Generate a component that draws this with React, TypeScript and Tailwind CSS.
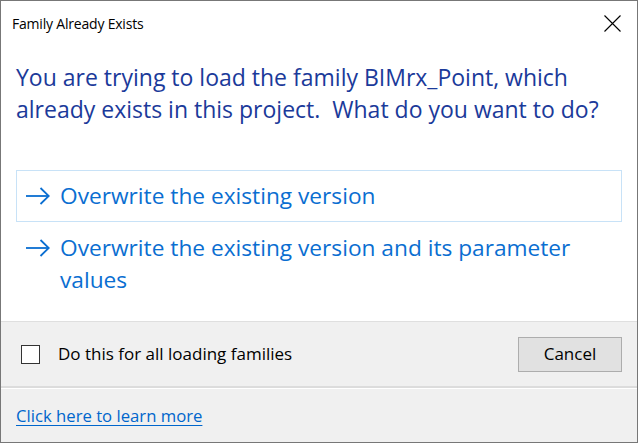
import React from "react";

const Arrow = () => (
  <svg width="24" height="18" viewBox="0 0 24 18" className="shrink-0" fill="none">
    <path d="M0 9 H22.5" stroke="#0a6ed1" strokeWidth="1.8" />
    <path d="M14.5 1 L22.8 9 L14.5 17" stroke="#0a6ed1" strokeWidth="1.8" />
  </svg>
);

export default function App() {
  return (
    <div
      className="w-[638px] h-[443px] border border-[#777777] bg-white flex flex-col overflow-hidden"
      style={{ fontFamily: '"Open Sans", "Noto Sans", sans-serif' }}
    >
      <div className="h-[45px] flex items-center justify-between pl-[11px] pr-[16px] shrink-0">
        <span className="text-[14px] text-black tracking-[-0.2px]">Family Already Exists</span>
        <svg width="17" height="17" viewBox="0 0 17 17" fill="none">
          <path d="M0.5 0.5 L16.5 16.5 M16.5 0.5 L0.5 16.5" stroke="#000" strokeWidth="1.1" />
        </svg>
      </div>
      <div className="flex-1 px-[15px]">
        <div className="mt-[15px] text-[23px] leading-[32px] text-[#1b3a9a]">
          You are trying to load the family BIMrx_Point, which
          <br />
          already exists in this project.&nbsp; What do you want to do?
        </div>
        <div className="mt-[45px] border border-[#c8e2f7] px-[9px] py-[9px] flex items-start gap-[10px]">
          <div className="h-[32px] flex items-center"><Arrow /></div>
          <span className="text-[22.7px] leading-[32px] text-[#0a6ed1]">
            Overwrite the existing version
          </span>
        </div>
        <div className="border border-transparent px-[9px] py-[9px] flex items-start gap-[10px]">
          <div className="h-[32px] flex items-center"><Arrow /></div>
          <span className="text-[22.7px] leading-[32px] text-[#0a6ed1]">
            Overwrite the existing version and its parameter
            <br />
            values
          </span>
        </div>
      </div>
      <div className="h-[67px] shrink-0 bg-[#f0f0f0] border-t border-[#dfdfdf] border-b-2 border-b-[#dcdcdc] flex items-center pl-[20px] pr-[15px]">
        <div className="w-[19px] h-[19px] border border-[#333333] bg-white shrink-0" />
        <span className="ml-[18px] text-[17px] text-black">Do this for all loading families</span>
        <div className="flex-1" />
        <div className="w-[104px] h-[35px] bg-[#e1e1e1] border border-[#adadad] flex items-center justify-center text-[17px] text-black">
          Cancel
        </div>
      </div>
      <div className="h-[54px] shrink-0 bg-[#f0f0f0] border-t border-white flex items-center pl-[15px]">
        <span className="text-[16.7px] text-[#0066cc] underline underline-offset-[3px]">
          Click here to learn more
        </span>
      </div>
    </div>
  );
}
